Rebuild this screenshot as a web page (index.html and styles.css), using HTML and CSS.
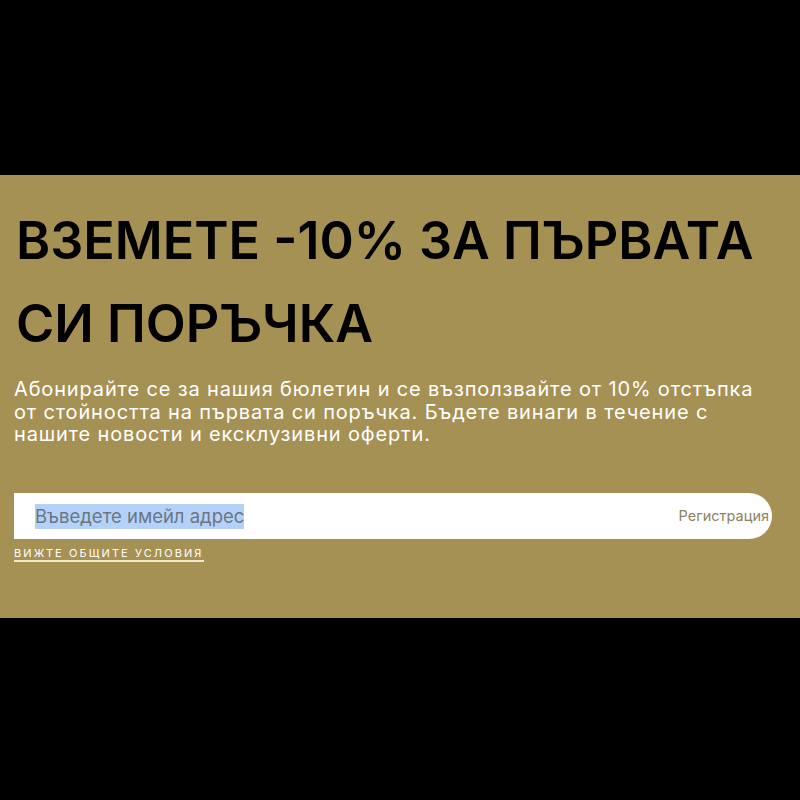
FILE: index.html
```html
<!DOCTYPE html>
<html lang="bg">
<head>
<meta charset="utf-8">
<title>Бюлетин</title>
<link rel="stylesheet" href="styles.css">
</head>
<body>
<section class="promo">
  <h1 class="promo-title">ВЗЕМЕТЕ -10% ЗА ПЪРВАТА СИ ПОРЪЧКА</h1>
  <p class="promo-text">Абонирайте се за нашия бюлетин и се възползвайте от 10% отстъпка от стойността на първата си поръчка. Бъдете винаги в течение с нашите новости и ексклузивни оферти.</p>
  <form class="signup">
    <div class="field">
      <span class="placeholder"><span class="sel">Въведете имейл адрес</span></span>
      <button type="button" class="submit">Регистрация</button>
    </div>
    <a class="terms" href="#">ВИЖТЕ ОБЩИТЕ УСЛОВИЯ</a>
  </form>
</section>
</body>
</html>
```
FILE: styles.css
```css
html, body {
  margin: 0;
  padding: 0;
  background: #000;
}
body {
  font-family: "Inter", "Noto Sans", sans-serif;
}
.promo {
  margin-top: 175px;
  height: 443px;
  box-sizing: border-box;
  background: #a69155;
  padding: 24px 28px 0 14px;
}
.promo-title {
  margin: 0;
  font-size: 52px;
  font-weight: 600;
  line-height: 83px;
  color: #000;
  letter-spacing: 0;
  padding-left: 2px;
}
.promo-text {
  margin: 13px 0 0;
  font-size: 20px;
  line-height: 22.5px;
  letter-spacing: 0.85px;
  color: #fff;
  font-weight: 400;
}
.signup {
  margin-top: 47px;
}
.field {
  height: 46px;
  width: 758px;
  background: #fff;
  border-radius: 0 23px 23px 0;
  display: flex;
  align-items: center;
  justify-content: space-between;
  box-sizing: border-box;
  padding-left: 21px;
}
.placeholder {
  font-size: 18.5px;
  color: #6b7585;
}
.sel {
  background: #b4d2f7;
  padding: 1px 0 2px;
}
.submit {
  border: 0;
  background: none;
  font-family: inherit;
  font-size: 14.5px;
  color: #8e8261;
  padding: 0 3px 0 0;
}
.terms {
  display: inline-block;
  margin-top: 7px;
  font-size: 11px;
  letter-spacing: 2.1px;
  color: #fff;
  text-decoration: none;
  border-bottom: 2px solid #f3e7c8;
  line-height: 14px;
}
```
